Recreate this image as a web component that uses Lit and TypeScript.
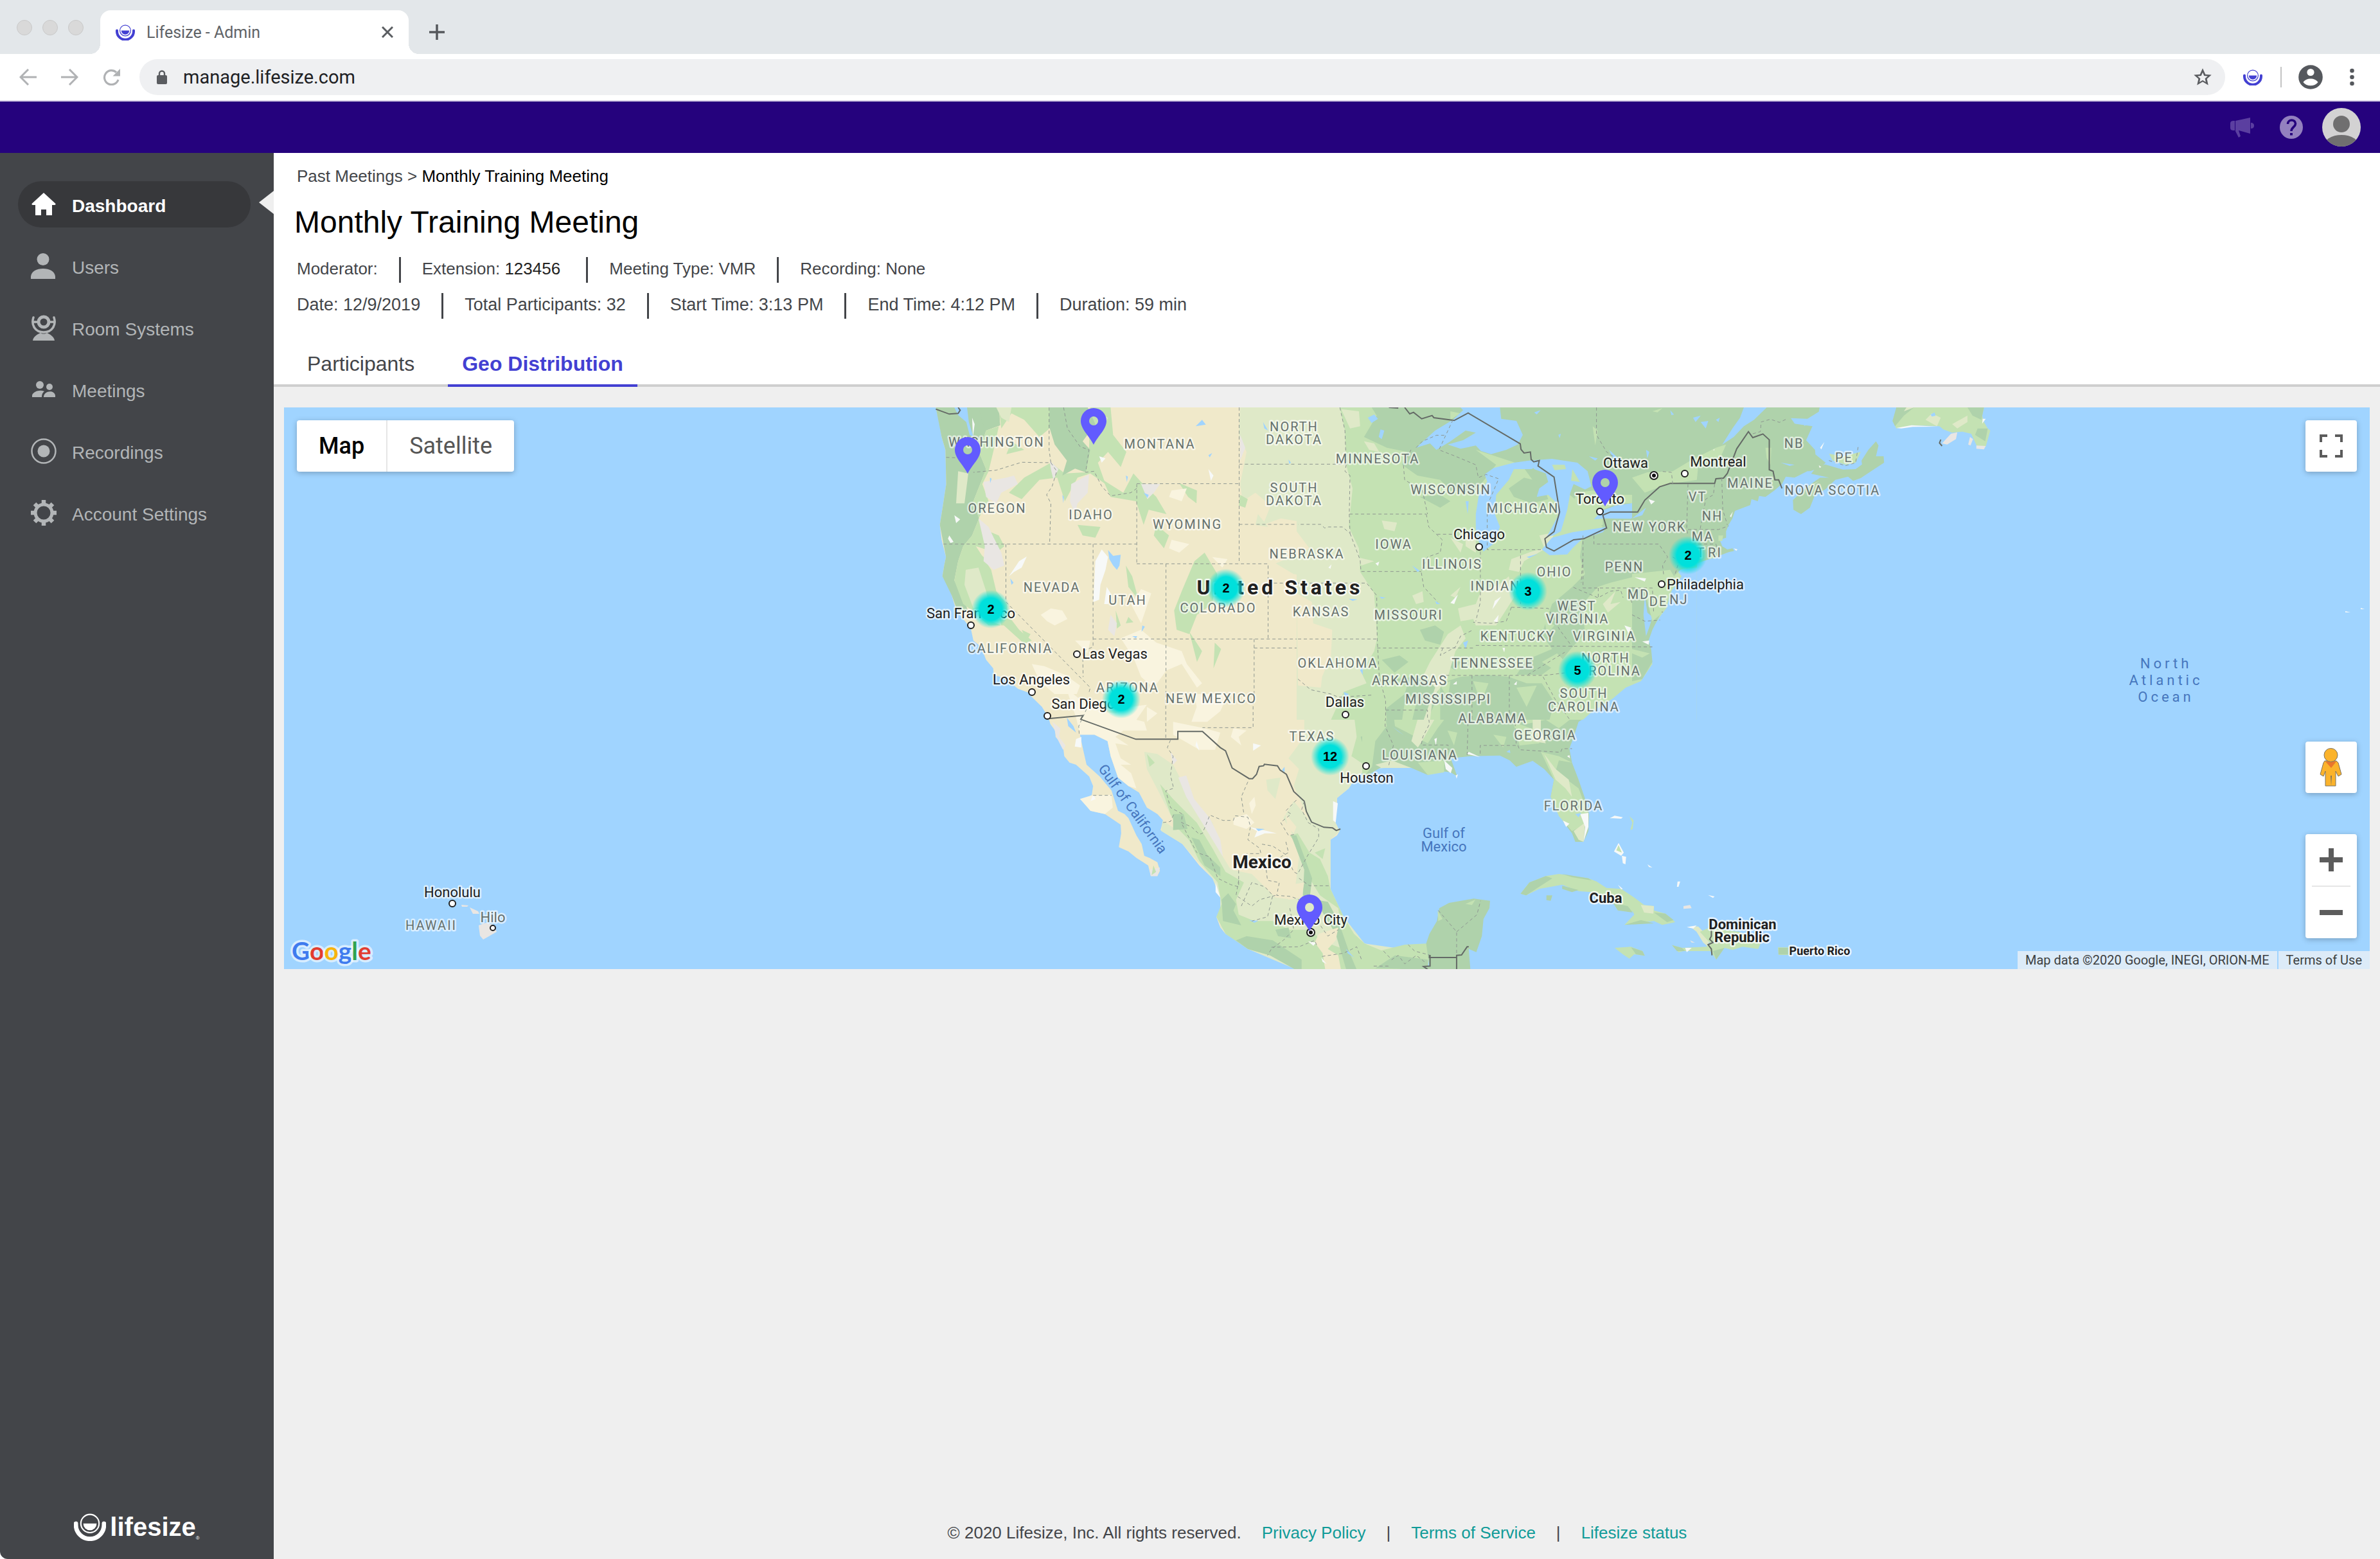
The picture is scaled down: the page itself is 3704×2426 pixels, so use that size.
import { LitElement, html, css, svg } from "lit";
import { customElement, property, state } from "lit/decorators.js";
import { classMap } from "lit/directives/class-map.js";

type Pt = [number, number];
type Label = [string, number, number];

/* ---------- icons ---------- */

const brandMark = (color: string) => svg`
  <path d="M3 18v2a21 21 0 0 0 42 0v-2" fill="none" stroke=${color} stroke-width="6.5" stroke-linecap="round"/>
  <circle cx="24" cy="18" r="13.6" fill="none" stroke=${color} stroke-width="2"/>
  <path d="M14 18h20a10 10 0 0 1-20 0z" fill=${color}/>`;

const navIcons: Record<string, unknown> = {
  dashboard: svg`<path fill="currentColor" d="M20 2 L38.500 19 Q39 21 37 21 H33 V37 H24 V28 H16 V37 H7 V21 H3 Q1 21 1.500 19z"/>`,
  users: svg`<ellipse cx="19" cy="9.500" rx="9.500" ry="9.500" fill="currentColor"/><path fill="currentColor" d="M0 40v-4c1-8 9-12 19-12s18 4 19 12v4z"/>`,
  rooms: svg`<path d="M4 4c-4 12 3 23 16 23s20-11 16-23M4 11h6M30 11h6" fill="none" stroke="currentColor" stroke-width="3.500" stroke-linecap="round"/>
    <circle cx="20" cy="11" r="8" fill="none" stroke="currentColor" stroke-width="5"/>
    <path d="M3 40c1-7 8-10 12-12 3 2 7 2 10 0 4 2 11 5 12 12z" fill="currentColor"/>`,
  meetings: svg`<circle cx="14" cy="13" r="6" fill="currentColor"/><circle cx="29" cy="16" r="5" fill="currentColor"/>
    <path d="M2 32v-3c2-6 12-9 19-6-3 2-4 5-4 9zM20 32c0-10 16-12 18-3v3z" fill="currentColor"/>`,
  recordings: svg`<circle cx="20" cy="20" r="18.500" fill="none" stroke="currentColor" stroke-width="2.500"/><circle cx="20" cy="20" r="9.500" fill="currentColor"/>`,
  settings: svg`<circle cx="20" cy="20" r="13" fill="none" stroke="currentColor" stroke-width="5"/>
    <path d="M20 0v7M20 33v7M0 20h7M33 20h7M6 6l5 5M29 29l5 5M34 6l-5 5M11 29l-5 5" stroke="currentColor" stroke-width="6.500"/>`,
};

/* ---------- map data ---------- */

const stateLabels: Label[] = [
  ["WASHINGTON", 1551, 695], ["MONTANA", 1805, 698], ["OREGON", 1552, 798], ["IDAHO", 1698, 808],
  ["WYOMING", 1848, 823], ["NEVADA", 1637, 921], ["UTAH", 1755, 941], ["COLORADO", 1896, 953],
  ["CALIFORNIA", 1572, 1016], ["ARIZONA", 1755, 1077], ["NEW MEXICO", 1885, 1094],
  ["NORTH", 2014, 671], ["DAKOTA", 2014, 691], ["SOUTH", 2014, 766], ["DAKOTA", 2014, 786],
  ["NEBRASKA", 2034, 869], ["KANSAS", 2056, 959], ["OKLAHOMA", 2082, 1039], ["MINNESOTA", 2144, 721],
  ["WISCONSIN", 2258, 769], ["MICHIGAN", 2370, 798], ["IOWA", 2169, 854], ["ILLINOIS", 2260, 885],
  ["INDIANA", 2335, 919], ["OHIO", 2419, 897], ["PENN", 2528, 889], ["NEW YORK", 2567, 827],
  ["MD", 2550, 932], ["DE", 2581, 943], ["NJ", 2613, 940], ["MISSOURI", 2192, 964],
  ["WEST", 2454, 950], ["VIRGINIA", 2455, 970], ["KENTUCKY", 2362, 997], ["VIRGINIA", 2497, 997],
  ["TENNESSEE", 2323, 1039], ["NORTH", 2499, 1031], ["CAROLINA", 2498, 1051], ["ARKANSAS", 2194, 1066],
  ["MISSISSIPPI", 2254, 1095], ["SOUTH", 2465, 1086], ["CAROLINA", 2465, 1107], ["ALABAMA", 2323, 1125],
  ["GEORGIA", 2405, 1151], ["LOUISIANA", 2210, 1182], ["FLORIDA", 2449, 1261], ["TEXAS", 2042, 1153],
  ["NB", 2792, 697], ["PE", 2870, 719], ["MAINE", 2724, 759], ["NOVA SCOTIA", 2852, 770],
  ["VT", 2642, 780], ["NH", 2665, 810], ["MA", 2650, 842], ["CT", 2640, 867], ["RI", 2669, 867],
  ["HAWAII", 671, 1447],
];

const cityLabels: Label[] = [
  ["San Francisco", 1511, 962], ["Las Vegas", 1735, 1025], ["Los Angeles", 1605, 1065],
  ["San Diego", 1686, 1103], ["Chicago", 2302, 839], ["Toronto", 2490, 784], ["Ottawa", 2530, 728],
  ["Montreal", 2674, 726], ["Philadelphia", 2654, 917], ["Dallas", 2093, 1100],
  ["Houston", 2127, 1218], ["Mexico City", 2040, 1439], ["Honolulu", 704, 1396],
];

const cityDots: Pt[] = [
  [1511, 973], [1676, 1018], [1606, 1077], [1630, 1114], [2302, 851], [2490, 796],
  [2622, 737], [2586, 909], [2094, 1112], [2126, 1192], [704, 1406],
];
const capitalDots: Pt[] = [[2574, 740], [2040, 1451]];

const clusters: [number, number, number][] = [
  [2, 1542, 948], [2, 1908, 915], [2, 1745, 1088], [3, 2378, 920],
  [5, 2455, 1043], [2, 2627, 864], [12, 2070, 1177],
];
const pins: Pt[] = [[1506, 737], [1702, 692], [2498, 788], [2038, 1449]];

/* Each sheet of the base map is drawn on its own grid. */
const west = svg`<g transform="translate(1420 620) scale(.3954 .33333)">
  <path class="sand" d="M92 42 105 110 115 180 130 240 133 400 120 500 108 590 115 660 132 740 125 780 118 830 140 870 155 920 170 980 200 1030 230 1075 240 1130 270 1160 290 1220 318 1260 320 1290 370 1310 415 1355 460 1375 490 1410 520 1440 530 1500H1600V42z"/>
  <path class="wood" d="M92 42H340L345 125 290 150 262 250 290 330 240 480 262 560 235 640 200 690 180 760 165 850 205 940 220 1000 175 985 155 920 118 830 125 780 132 740 108 590 120 500 133 400 130 240 115 180z"/>
  <path class="leaf" d="M290 150 340 130 320 240 300 340 275 400 300 480 260 560 300 620 340 640 362 690 330 720 250 690 310 800 330 900 372 960 375 1010 420 1080 470 1130 440 1145 360 1060 300 1060 235 990 200 960 165 850 180 760 200 690 235 640 262 560 240 480 290 330 262 250z"/>
  <path class="leaf" d="M340 42H595L560 120 500 180 440 100 390 70 350 140zM700 42H780L790 170 842 250 820 320 770 250 730 300 760 400 700 350 650 370 600 480 570 370 500 380 430 470 380 440 440 370 500 330 545 300 600 350 680 345 695 240z"/>
  <path class="wood" d="M540 42H690L720 120 670 200 700 240 682 345 640 328 590 360 608 290 560 215 538 130zM260 42H340L345 125 285 150z"/>
  <path class="leaf" d="M750 380 830 440 870 350 900 390 960 460 1000 540 930 520 910 590 880 480 780 460zM1050 395 1120 430 1118 490 1085 460zM840 780 865 830 890 940 850 880zM1060 900 1110 760 1150 720 1200 820 1180 960 1120 1010 1090 1100 1040 1080 1030 990zM650 590 740 600 720 650 670 640zM960 590 1010 640 990 700 950 640zM230 690 300 760 290 800zM800 990 820 1060 805 1075zM1190 1140 1215 1170 1185 1260zM850 1020 870 1045 840 1050z"/>
  <path class="meadow" d="M1290 42H1600V590L1450 560 1380 590 1410 500 1350 440 1300 480 1290 400 1315 250 1285 170zM1430 770 1568 700H1600V840L1500 820zM330 42 390 42 380 110 350 90zM210 800 260 790 290 900 300 960 240 980 205 870zM180 340 220 350 205 490 172 490zM300 990 340 1010 350 1060 310 1040zM1360 540 1400 600 1350 590zM720 60 770 90 740 160z"/>
  <path class="leaf" d="M1290 450 1320 470 1310 510 1285 500zM1090 1090 1140 1180 1120 1230zM390 200 440 240 370 260zM430 1080 465 1100 450 1130z"/>
  <path class="stone" d="M280 390 370 370 400 360 415 400 350 440 330 490 290 460zM260 560 300 600 320 650 350 720 362 780 320 800 280 760 285 690zM625 400 695 355 690 440 650 490 640 540 620 480zM540 290 575 330 555 380 545 330zM900 400 975 400 950 440 925 470zM780 1010 805 1050 795 1110 770 1080zM1290 170 1310 230 1290 290zM690 1430 730 1400 720 1470zM560 1440 620 1460 610 1500zM910 1390 970 1420 960 1460z"/>
  <path class="pale" d="M505 1010 545 980 590 990 610 1030 560 1060 530 1040zM860 960 900 890 940 910 920 980 900 1050zM820 1120 900 1080 960 1140 1060 1180 1080 1240 1140 1330 1120 1350 1060 1240 1000 1270 950 1350 900 1300 870 1210zM470 1240 520 1250 600 1290 660 1340 640 1400 560 1380 500 1320zM1020 430 1080 420 1060 480 1010 460zM1020 660 1090 680 1050 720 1010 700zM1090 1400 1150 1430 1170 1500H1050zM1190 1430 1230 1500H1180zM640 1130 700 1130 690 1190zM1180 740 1240 750 1220 790zM650 1420 720 1440 700 1500H630z"/>
  <path class="white" d="M720 760 745 705 770 740 760 800 740 870 735 940 712 950zM380 830 420 760 450 738 430 790 400 810zM145 640 162 670 150 675 140 655zM765 880 780 910 770 960 755 960zM735 270 760 280 745 300zM1165 330 1185 360 1175 385zM235 90 245 120 238 180zM165 545 188 565 172 582z"/>
  <path class="sea" d="M165 42H215L222 110 240 180 225 170 212 110 180 78zM770 708 790 735 820 730 815 780 805 800 790 780 775 750zM1115 130 1140 100 1155 122zM385 840 398 860 390 870zM305 370 312 375 306 395zM590 450 596 460 594 490zM910 440 930 450 925 465zM1165 265 1180 255 1170 275zM905 1060 915 1065 902 1090zM865 1110 885 1110 880 1120zM1380 110 1400 150 1385 140zM1480 285 1490 300 1483 305zM840 360 848 365 844 390z"/>
  <path class="line" d="M92 50 145 73 180 70 188 55 180 42M530 1495 680 1480 670 1500"/>
  <path class="dash" d="M538 42V240L545 300 430 298 330 335 240 345M545 300 568 340 550 410 528 450 545 490 540 680M595 42 610 140 660 225 695 240 682 345 715 340 745 410 780 455 860 440 883 420M122 680H883M883 400V772M883 398H1285M1286 42V772M1286 307H1600M1286 588H1600M883 772H1400V1123M998 772V1500M368 680V950L700 1350 680 1440 680 1500M711 680V1160L670 1180 672 1300M711 1123H1600M1345 1123V1500M1345 1165H1518V1330L1560 1345M1400 862H1600M133 275 170 277"/>
</g>`;

const middle = svg`<g transform="translate(2020 620) scale(.3954 .33333)">
  <path class="leaf" d="M-5 42H1570V1500H-5z"/>
  <path class="meadow" d="M-5 42H165L185 150 190 310 215 420 200 600 240 700 245 810 300 910 312 1120 300 1180 250 1280 270 1330 180 1370 130 1500H-5zM170 50 240 60 245 130 205 140zM260 200 300 210 320 250 280 240zM230 740 300 760 250 780z"/>
  <path class="sand" d="M-5 620 45 700 -5 740zM-5 910 55 950 60 1050 135 1080 130 1200 95 1300 90 1350 0 1340z"/>
  <path class="wood" d="M260 180 310 80 290 42H1570V790L1420 800 1330 830 1230 860 1180 880 1120 960 1130 1100 1080 1160 1040 1220 960 1290 860 1290 900 1220 1000 1170 960 1100 1000 960 1080 880 1130 820 1110 740 1120 650 1200 600 1140 520 1060 440 960 440 880 310 700 240 780 310 720 400 690 440 600 430 560 380 470 360 410 310 430 250 350 230z"/>
  <path class="leaf" d="M1020 640 1100 440 1160 430 1250 450 1380 450 1340 490 1260 490 1200 520 1200 590 1080 620zM1370 380 1430 330 1530 290 1570 310V390L1460 400 1410 430 1370 440z"/>
  <path class="wood" d="M830 420 890 370 960 390 985 470 920 490 850 460zM480 1080 540 1060 575 1090 560 1150 500 1130zM330 1220 400 1200 435 1230 380 1280zM345 1450 420 1380 430 1340 380 1310 460 1300 560 1330 540 1420 510 1500H350zM560 1330 640 1300 740 1290 830 1300 900 1330 960 1330 1010 1420 990 1500H560zM560 1230 640 1230 620 1270zM480 460 560 450 600 480 560 510z"/>
  <path class="meadow" d="M830 800 840 750 920 715 970 700 950 640 1010 625 990 690 890 760 870 810zM630 980 700 960 720 900 790 870 830 830 850 930 780 1060 700 1060 690 1030 640 1040zM590 1100 640 1060 660 1120 620 1180 590 1300 530 1400 520 1500H495L540 1350 495 1290 520 1230zM450 920 490 900 495 950 465 960zM330 570 390 580 380 620 340 610zM660 620 700 640 700 720 660 690zM1180 920 1200 960 1250 900 1230 960 1270 950 1220 1000zM1395 880 1450 860 1440 930 1400 960zM640 880 620 930 600 920zM600 650 650 680 640 720z"/>
  <path class="leaf" d="M600 60 640 70 600 100zM1160 130 1180 150 1170 220zM560 1340 600 1320 590 1400zM690 1320 750 1330 720 1420zM860 1350 940 1340 900 1440zM960 1230 1020 1190 1060 1240 1000 1260zM420 1420 470 1400 450 1500H410zM970 1030 1010 1060 980 1100z"/>
  <path class="white" d="M1285 1060 1312 1070 1300 1095zM765 985 775 945 800 925 780 960zM600 955 630 915 615 960zM770 1040 790 1010 785 1045zM1355 1130 1385 1145 1380 1155zM320 762 315 782 305 770zM610 1335 625 1320 625 1335zM850 1335 862 1320 860 1338zM1450 365 1462 385 1448 388zM1380 480 1400 485 1385 500zM715 450 745 388 725 470 712 520zM805 1165 815 1165 812 1185zM120 790 132 775 128 795z"/>
  <path class="sea" d="M465 230 540 150 610 100 650 55 640 42H795L800 95 860 105 885 170 865 215 820 240 760 260 720 245 700 220 640 235 590 215 650 195 700 160 660 150 600 200 545 240 520 210z"/>
  <path class="sea" d="M700 610 700 540 712 450 745 388 735 355 770 325 850 300 910 290 945 310 920 330 850 330 830 380 780 450 775 540 795 600 768 680 730 715 705 650z"/>
  <path class="sea" d="M910 290 1000 282 1100 300 1140 340 1155 410 1130 425 1085 400 1072 440 1060 520 1035 620 1005 640 980 645 1025 545 1020 490 985 450 940 460 950 420 985 390 975 350 930 330z"/>
  <path class="leaf" d="M1000 310 1050 310 1055 330 1010 335zM1080 330 1110 390 1075 385z"/>
  <path class="sea" d="M960 705 1000 650 1080 625 1215 600 1200 625 1120 655 1080 700 1060 728 990 732zM1165 565 1195 525 1250 500 1370 480 1368 520 1310 562 1210 560zM275 90 300 75 315 95 290 115zM325 145 340 150 330 190 318 180zM1225 240 1270 290 1250 310zM930 65 955 55 940 75zM1025 170 1035 165 1030 185zM1365 250 1410 230 1425 260 1390 275zM1145 270 1180 280 1170 290zM660 480 672 480 668 540zM1470 120 1475 100 1485 130zM900 740 945 725 910 745zM320 925 345 930 330 935zM450 780 480 805 470 810zM200 935 235 938 215 945zM540 945 560 960 545 960zM180 1370 200 1380 190 1410zM650 1140 670 1130 660 1170zM245 1270 255 1240 255 1290zM1340 1000 1360 960 1365 1000 1380 1040 1340 1030z"/>
  <path class="sea" d="M1570 790 1490 800 1510 830 1470 900 1450 980 1430 1010 1390 1080 1375 1130 1385 1180 1395 1240 1350 1320 1290 1350 1240 1400 1150 1470 1120 1502H1570zM1370 950 1380 1000 1400 1020 1385 1060 1370 1120 1365 1030z"/>
  <path class="line" d="M358 42 395 45M420 42 440 72 455 65 487 95 528 80 535 90 615 103 670 68 875 212 878 238 890 255 915 250 918 285 928 296 950 290 945 315 1008 367 1030 530 1008 622 972 655 978 695 1008 712 1085 660 1125 655 1215 605 1200 545 1230 530H1337L1370 470 1425 413 1470 397H1570"/>
  <path class="dash" d="M165 42 185 150 190 310 185 340 205 360 202 540H505M202 540 205 630 175 600 120 600 105 605 90 588H0M0 307H190M205 630 245 755 248 808H485M505 540 515 600 568 660 560 720 510 740 485 808 495 880 550 950M548 634H610M610 100 555 240 620 270 700 310 710 370 740 355 790 375 745 500V690L745 706H960M465 230 490 200 545 172H580M445 240 415 310 420 380 490 430 510 540M718 715V950L700 1040M876 706V960M840 975 820 1040 760 1050 690 1045M840 975 985 980 1030 1080 1080 1160M1122 640V885H1430M1165 640V680H1425L1455 740 1440 830M1182 885V930L1230 900 1270 895 1280 930M1180 930 1080 880M0 862H270L310 920 312 1123 320 1300 345 1410 345 1500M0 1123H312M312 1165H690M570 1165 560 1200 620 1160 640 1110 690 1080M700 1153 1395 1160M560 1293H970M685 1293V1500M832 1293V1500M970 1293 1060 1280 1175 1290M905 1290 1050 1185M345 1455H510V1500M1175 42V170L1215 250 1240 270M1535 397V640M1345 345 1430 335 1470 340 1465 400M1120 750 1115 860M1400 885 1405 997H1440M1310 940 1340 1030 1400 1045M965 1300 1010 1400 1070 1500M0 1310 50 1360 130 1380 160 1395 290 1385"/>
</g>`;

const east = svg`<g transform="translate(2540 620) scale(.3954 .33333)">
  <path class="wood" d="M0 42H738L735 62 690 95 625 92 640 118 710 130 685 195 720 240 722 262 762 300 745 320 690 345 640 370 605 365 590 400 560 430 525 460 500 455 495 480 470 470 465 498 405 525 395 560 380 590 370 620 370 650 345 660 355 690 375 705 395 700 402 712 380 718 330 740 280 760 190 800 165 830 150 880 145 930 110 1010 80 1080 65 1130 75 1170 80 1230 40 1310 0 1320z"/>
  <path class="sea" d="M440 42H530L480 100 440 130 400 180 355 215 395 140 425 90zM150 55 165 75 155 78zM240 90 270 80 250 110zM270 110 300 105 290 140zM585 300 640 310 620 315zM55 240 68 250 60 280zM330 100 345 90 340 110zM670 110 690 100 680 130zM640 370 690 340 720 340 700 355zM0 560 55 510 40 545zM50 920 60 1000 80 1020 70 1060 55 1110 45 1010z"/>
  <path class="leaf" d="M0 370 60 345 160 340 230 290 330 230 370 215 350 270 260 320 255 380 160 397 110 413 50 440zM0 820 150 800 165 830 150 880 145 930 110 1010 80 1040 50 900 0 880zM525 230 548 230 545 310 530 280zM340 640 358 640 355 665 340 665zM300 740 345 735 320 748zM80 60 120 45 100 65zM0 1170 70 1190 40 1210 0 1190z"/>
  <path class="wood" d="M665 540 635 520 633 475 680 420 740 370 775 370 705 352 725 320 760 308 830 332 880 330 905 308 903 290 930 240 960 200 970 220 960 270 990 270 992 300 960 325 900 372 870 385 850 365 800 380 760 425 720 450 700 510z"/>
  <path class="leaf" d="M775 258 830 270 900 250 880 300 840 310 790 290zM1040 42H1385L1378 80 1385 110 1400 140 1410 150 1392 225 1360 230 1335 165 1300 155 1260 160 1225 145 1210 130 1100 125 1040 140 1025 105 1060 60zM1345 180 1375 130 1395 190 1380 225z"/>
  <path class="wood" d="M1040 42H1110L1070 80 1035 130 1025 105zM1320 42H1385L1375 100 1340 80zM1360 140 1400 140 1390 200 1350 170z"/>
  <path class="meadow" d="M1180 70 1215 90 1200 130 1155 100zM1260 120 1320 80 1320 110 1280 140zM1070 60 1080 42H1110z"/>
  <path class="sea" d="M1175 75 1190 65 1195 80 1180 85z"/>
  <path class="white" d="M1040 138 1100 125 1205 132 1105 133 1060 140zM1380 95 1392 95 1378 118zM740 230 757 203 745 238zM735 312 745 320 738 324zM385 550 397 528 390 555zM65 470 90 480 75 495zM400 700 415 705 410 712zM40 1135 68 1130 65 1150zM10 835 55 840 50 855zM690 415 738 385 700 412zM320 240 325 235 322 245z"/>
  <path class="stone" d="M1220 210 1255 165 1280 158 1275 190 1240 215zM1330 180 1342 190 1332 220 1323 215zM1355 220 1392 222 1385 238 1355 235z"/>
  <path class="line" d="M0 530H22L50 475 108 413 150 397H325L330 375 360 372 375 350 412 235 458 155 475 183 515 166 540 193V333L555 340 562 380H577L590 420M1215 192 1210 208 1220 222"/>
  <path class="dash" d="M475 165 505 155 508 110 545 97 580 112 610 95M220 400 215 610 220 640M220 612H340L380 595M353 372 357 520 375 590M325 400 320 450 290 470 268 610M215 680H330L340 720M0 680H105L140 740 120 780 125 830M0 885H80L85 1000M0 1160H78M775 290 840 314 880 300 890 225M160 740 185 760 170 818M0 1010 50 1040 110 1035M160 400 155 345 110 340"/>
</g>`;

const south = svg`<g transform="translate(1540 1080) scale(.40816 .33333)">
  <path class="sand" d="M150 0 200 60 225 110 232 140 250 170 252 200 280 240 285 290 305 320 330 330 380 385 395 430 390 470 370 490 345 490 370 520 385 545 440 560 500 610 502 650 493 715 530 735 560 765 605 800 615 850 640 850 650 825 640 785 610 765 590 755 580 700 560 660 530 580 515 560 490 545 465 450 420 385 370 330 357 260 345 190 400 190 450 220 462 290 490 390 530 430 570 460 600 530 640 560 662 590 652 635 735 700 800 800 850 860 868 890 880 950 885 980 880 1010 865 1040 880 1090 900 1120 940 1150 985 1190 1070 1220 1120 1255 1170 1286H1575V1190L1500 1200 1430 1165 1390 1120 1350 1040 1320 970 1300 910 1300 680 1325 660 1335 640 1315 590 1325 530 1325 485 1370 440 1390 400 1350 370 1440 350 1575 335V0z"/>
  <path class="pale" d="M160 0H300L330 110 345 190 400 190 450 220 462 290 490 390 530 430 560 440 540 370 500 330 540 330 500 300 480 230 530 240 480 200 510 170 600 170 590 130 560 120 600 50 540 60 480 90 420 80 350 30 320 0zM385 475 465 470 470 530 440 560 385 545 345 490zM600 60 640 90 600 130zM700 130 780 150 820 160 880 180 860 260 800 260 700 190zM780 0H910L880 80 830 130 770 130 790 60zM930 160 980 170 950 200 960 240 920 200zM930 580 980 560 1010 600 980 630 930 610zM990 510 1010 480 1015 520 1000 560z"/>
  <path class="meadow" d="M1200 0H1575V340L1440 350 1390 400 1370 440 1325 485 1315 590 1335 640 1300 680V910L1350 1040 1430 1165 1575 1190V1286H1170L985 1190 880 1090 880 950 850 860 735 700 655 640 660 590 720 640 680 540 600 350 590 270 640 280 700 330 760 470 850 600 880 740 920 820 1000 840 1090 950 1160 960 1180 760 1150 640 1120 580 1160 500 1220 590 1160 430 1180 350 1140 300 1200 200zM1055 400 1110 390 1090 490 1060 450z"/>
  <path class="leaf" d="M650 420 700 490 740 540 790 600 850 720 900 830 970 880 940 960 950 1030 1010 1060 1080 1060 1140 1100 1230 1100 1260 1150 1350 1190 1340 1100 1330 1000 1260 940 1210 840 1170 700 1145 660 1175 650 1220 740 1260 770 1290 850 1300 910 1350 1040 1390 1120 1430 1165 1500 1200 1568 1190V1286H1170L1070 1220 985 1190 900 1120 865 1040 885 980 870 880 800 780 760 680 720 630 690 560zM1390 100 1460 60 1520 80 1500 300 1440 340 1380 290 1400 200zM600 280 630 320 610 340z"/>
  <path class="wood" d="M770 670 800 680 830 750 880 810 880 850 820 800zM885 960 910 930 940 980 930 1010 960 1080 890 1060zM1150 660 1170 660 1200 760 1230 860 1220 960 1195 940 1200 820zM1240 960 1290 970 1330 1060 1370 1200 1400 1286H1360L1320 1120 1260 1000zM980 1130 1080 1150 1190 1240 1190 1286H1165L1070 1220 985 1190 940 1150zM1415 200 1480 160 1530 230 1568 260V340L1440 300zM1480 0H1568V240L1510 160zM1090 1100 1140 1090 1150 1140 1100 1130zM700 560 740 560 755 630 700 635z"/>
  <path class="sand" d="M1255 1120 1330 1090 1320 1150 1290 1190 1330 1220 1340 1286H1280L1270 1210 1240 1160zM1100 900 1200 880 1190 950 1140 960zM1130 560 1170 620 1160 650 1135 620z"/>
  <path class="stone" d="M240 130 270 160 265 200 290 240 280 260 255 200zM720 390 750 380 780 490 840 580 880 680 890 760 860 700 800 580 750 480zM690 270 715 310 700 330zM610 820 650 810 640 850 615 850z"/>
  <path class="leaf" d="M625 800 635 830 618 845zM1240 740 1280 720 1270 770zM1250 770 1290 870 1240 860z"/>
  <path class="white" d="M330 210 350 200 350 250 325 245zM395 470 405 490 385 500zM862 880 880 950 862 925zM1005 230 1035 240 1005 265zM990 620 1060 640 1095 650 1050 650 1010 670 1020 640zM790 220 800 265 785 240zM1310 500 1328 510 1320 600 1310 590zM1215 1155 1245 1160 1235 1175zM1265 1230 1285 1260 1270 1250z"/>
  <path class="sea" d="M295 110 320 150 330 180 300 150zM1015 628 1050 630 1025 640zM1360 1190 1390 1230 1365 1210zM1475 1240 1480 1210 1485 1200zM1490 210 1510 220 1495 230zM1115 355 1125 340 1125 365zM990 1055 1025 1058 1010 1068zM1330 310 1350 320 1340 330z"/>
  <path class="line" d="M225 115 357 100 348 118 558 211H718V175H812L880 250 900 265 925 345 990 395H1003L1018 375 1028 338 1045 335 1048 328 1098 335 1108 355 1132 375 1160 455 1200 500 1208 548 1228 598 1275 622 1308 625 1322 637 1338 630"/>
  <path class="dash" d="M370 70 340 150 342 185M672 0V211M1005 30V157H812M690 215 678 250 700 290 690 380 702 440 672 452 690 530 735 560 732 600 770 620 800 655 812 650 840 565 890 590 930 590 935 568 985 575 995 620 985 680 1030 720 1035 745H980M985 410 960 480 970 560M662 600 690 595 705 555M735 610 790 740 840 760 870 860 920 890 950 900 950 820M395 473H465M1170 495 1130 545 1150 560 1110 600 1140 660 1165 655M1200 500 1190 540 1215 600 1255 630 1255 670 1210 760 1175 840 1160 830 1130 750 1080 710 1035 700M1055 820 1060 870 1105 880 1095 940 1150 945 1180 960M1180 860 1220 895H1300M950 870 940 940 1000 990 1030 960 1090 940M960 990 1000 880 1050 900 1080 940 1060 1040 1000 1060M1145 1000 1160 1100 1120 1150 1075 1190 1060 1220M1075 1182 1180 1180 1240 1150 1250 1180M1250 1060 1290 1130 1330 1100M1268 1225 1350 1210 1400 1180 1420 1245 1460 1280H1530M1510 10V150L1530 200 1540 270 1520 345M1130 690 1140 740 1110 760"/>
</g>`;

const gulf = svg`<g transform="translate(2120 1080) scale(.5102 .33333)">
  <path class="wood" d="M0 -5H785L740 40 700 92 660 130 645 200 632 255 640 320 660 400 680 490 692 560 690 640 675 690 650 690 640 650 615 600 600 560 575 480 585 400 555 350 520 312 470 340 450 310 420 287 330 290 270 300 290 385 270 365 240 360 200 378 150 345 60 340 0 395z"/>
  <path class="leaf" d="M0 0H60L75 150 40 220 30 340 0 395zM90 30 210 30 230 0H280L270 80 230 160 200 230 150 190 100 150zM400 0 490 10 520 80 560 100 620 60 600 0H785L700 92 650 100 600 160 560 120 500 140 470 100 430 70zM460 130 550 180 540 230 480 240zM545 270 600 290 640 320 600 310 590 360 660 440 690 560 680 610 640 640 600 570 575 480 585 400zM260 170 290 180 280 240zM400 190 440 200 430 250zM170 320 250 310 250 365 200 378z"/>
  <path class="meadow" d="M180 60 230 50 220 120 190 200 170 250 150 220 165 140zM520 110 545 100 545 170 560 230 520 220zM555 280 590 350 630 400 640 480 620 440 590 400zM40 330 90 310 150 345 60 345zM645 640 680 600 675 690 660 680z"/>
  <path class="white" d="M665 560 690 555 690 620 675 690 680 620zM612 590 632 605 622 620zM320 280 360 295 325 270zM250 310 275 345 270 370 255 350zM625 290 632 285 634 300zM220 210 228 205 225 240zM285 380 292 375 288 395z"/>
  <path class="sea" d="M90 150 130 195 155 220 110 175zM650 560 668 555 660 575zM205 70 212 95 195 120zM440 270 450 260 452 275z"/>
  <path class="leaf" d="M0 1165 50 1200 130 1170 195 1165 205 1200 200 1286H0z"/>
  <path class="wood" d="M195 1165 205 1120 228 1060 235 1000 265 975 340 955 390 965 388 1000 370 1050 365 1130 348 1205 325 1190 330 1286H100L205 1270zM40 1280 100 1220 200 1240V1286z"/>
  <path class="leaf" d="M315 980 345 960 335 985zM230 1010 245 1050 232 1060z"/>
  <path class="leaf" d="M483 932 510 880 560 850 600 840 690 860 715 875 745 905 790 910 830 950 860 985 890 990 890 1010 925 1025 955 1065 915 1078 890 1060 800 1078 830 1030 825 1015 780 1010 765 975 700 925 660 920 610 890 540 910 500 940z"/>
  <path class="wood" d="M483 932 510 880 560 850 580 860 530 910 500 940zM610 840 690 860 700 870 640 855zM610 895 660 915 640 925 610 910zM890 1020 925 1025 950 1055 930 1065zM800 1078 850 1055 890 1070zM765 975 810 990 825 1020 780 1010zM562 940 580 940 575 965 562 962z"/>
  <path class="meadow" d="M850 985 890 990 888 1025 860 1020zM1000 1085 1025 1085 1060 1140 1055 1180 1040 1160 1020 1110z"/>
  <path class="leaf" d="M770 1185 820 1180 855 1200 862 1222 830 1215 815 1235 795 1215zM945 1172 975 1185 1050 1180 1060 1160 1030 1110 1060 1090 1100 1100 1150 1110 1215 1165 1208 1190 1160 1180 1130 1195 1105 1185 1080 1240 1062 1200 980 1200 965 1205zM1268 1183H1300V1218H1270z"/>
  <path class="wood" d="M820 1183 855 1200 862 1222 835 1215zM945 1172 975 1185 985 1200 960 1200zM1070 1200 1105 1185 1080 1240zM1270 1185H1300V1216H1270z"/>
  <path class="white" d="M755 580 770 568 795 575 790 582 765 580zM768 735 782 695 798 740 790 755zM792 755 805 760 803 795 795 790zM960 900 962 875 970 875 965 900zM1055 938 1075 945 1070 952zM870 795 885 810 875 808zM780 890 795 910 790 912zM990 1088 1020 1080 1010 1095zM985 1185 1005 1185 990 1205z"/>
  <path class="stone" d="M980 990 1000 985 1005 1000 980 1003zM1000 1150 1015 1160 1005 1160z"/>
  <path class="leaf" d="M775 730 782 705 792 740zM815 570 828 590 825 630 818 635 824 600z"/>
  <path class="line" d="M205 1218V1230H288V1220L303 1218 320 1180 325 1180M207 1218V1270L187 1272 200 1286M288 1230V1286M1065 1100V1130L1060 1145 1070 1160 1055 1170 1065 1190 1067 1220"/>
  <path class="dash" d="M70 30V150L95 240 80 340M70 75H200L205 140 185 200 180 238H262V260M325 0 320 290M462 0 470 240H360V290M475 240 480 260 605 272 610 255H640M600 0 640 120M232 1010 288 1110V1220M288 1110 350 1030 361 965M140 1170 160 1200 205 1218M65 1200 90 1240 110 1220 130 1260 165 1220 190 1250M35 1270H80"/>
</g>`;

const hawaii = svg`
  <path class="stone" d="M745 1440 756 1436 768 1439 773 1450 752 1462 747 1456z"/>
  <path class="stone" d="M731 1412 744 1418 746 1422H736zM718 1408 729 1409 727 1411H719z"/>
  <path class="white" d="M3650 951 3658 953H3650zM3674 946 3680 948H3674z"/>`;

@customElement("geo-map")
export class GeoMap extends LitElement {
  @state() private view: "map" | "satellite" = "map";

  static styles = css`
    :host { display: block; position: relative; overflow: hidden; aspect-ratio: 3246 / 874; background: #a0d4ff; font-family: Roboto, "Liberation Sans", sans-serif; }
    .canvas { display: block; width: 100%; height: 100%; }
    .sand { fill: #f0e9ca; } .meadow { fill: #dfe9c8; } .leaf { fill: #c4e2b3; } .wood { fill: #afd2ab; }
    .pale { fill: #f9f4df; } .stone { fill: #e9e6e3; } .white { fill: #f7f9f8; } .sea { fill: #a0d4ff; }
    .line, .dash { fill: none; stroke: #646a66; stroke-width: 2; vector-effect: non-scaling-stroke; }
    .dash { stroke: #8e9791; stroke-width: 1; stroke-dasharray: 5 4; }
    text { text-anchor: middle; paint-order: stroke; stroke-linejoin: round; }
    .state { font-size: 20px; letter-spacing: 2px; fill: #66716d; stroke: rgba(255, 255, 255, .6); stroke-width: 5px; }
    .city { font-size: 22px; fill: #202020; stroke: rgba(255, 255, 255, .65); stroke-width: 5px; }
    .minor { fill: #66716d; }
    .country { font-size: 22px; font-weight: 700; fill: #202020; stroke: rgba(255, 255, 255, .75); stroke-width: 5px; }
    .small { font-size: 18px; }
    .large { font-size: 28px; }
    .huge { font-size: 32px; letter-spacing: 5px; }
    .water { font-size: 22px; fill: #4676bd; }
    .ocean { letter-spacing: 5px; }
    .dot { fill: #fff; stroke: #202020; stroke-width: 2; }
    .core { fill: #111; }
    .count { font: 700 20px "Liberation Sans", Arial, sans-serif; fill: #000; }
    .control { background: #fff; border: 0; border-radius: 4px; box-shadow: 0 2px 8px rgba(0, 0, 0, .25); }
    button { font: inherit; color: inherit; background: none; border: 0; padding: 0; cursor: pointer; }
    .types { position: absolute; left: 20px; top: 20px; display: flex; height: 80px; font-size: 36px; color: #565656; }
    .types button { padding: 0 34px; }
    .types button + button { border-left: 2px solid #e6e6e6; }
    .types .on { color: #000; font-weight: 500; }
    .icon { display: grid; place-items: center; width: 80px; height: 80px; }
    .top { position: absolute; right: 20px; top: 20px; }
    .stack { position: absolute; right: 20px; bottom: 48px; display: flex; flex-direction: column; gap: 64px; }
    .zoom { display: flex; flex-direction: column; align-items: center; }
    .rule { width: 60px; height: 2px; background: #e6e6e6; }
    .google { position: absolute; left: 10px; bottom: 0; width: 132px; height: 56px; }
    .google text { font: 700 39px Lato, "Open Sans", sans-serif; text-anchor: start; stroke: rgba(255, 255, 255, .6); stroke-width: 7px; }
    .legal { position: absolute; right: 0; bottom: 0; display: flex; gap: 2px; font-size: 20px; line-height: 28px; color: #3c3f41; }
    .legal > * { background: rgba(245, 245, 245, .7); padding: 0 12px; color: inherit; text-decoration: none; }
  `;

  private labels(items: Label[], cls: string) {
    return items.map(([t, x, y]) => svg`<text class=${cls} x=${x} y=${y}>${t}</text>`);
  }

  render() {
    return html`
      <svg class="canvas" viewBox="442 634 3246 874" preserveAspectRatio="xMidYMid slice" role="img" aria-label="Participants by location">
        <defs>
          <radialGradient id="glow">
            <stop offset="0" stop-color="#00e0dc"/><stop offset=".58" stop-color="#00e0dc"/><stop offset="1" stop-color="#00e0dc" stop-opacity="0"/>
          </radialGradient>
        </defs>
        ${west}${south}${gulf}${middle}${east}${hawaii}
        ${this.labels(stateLabels, "state")}
        ${cityDots.map(([x, y]) => svg`<circle class="dot" cx=${x} cy=${y} r="5"/>`)}
        ${capitalDots.map(([x, y]) => svg`<circle class="dot" cx=${x} cy=${y} r="6"/><circle class="core" cx=${x} cy=${y} r="3"/>`)}
        <circle class="dot" cx="767" cy="1444" r="4"/>
        ${this.labels(cityLabels, "city")}
        ${this.labels([["Hilo", 767, 1435]], "city minor")}
        ${this.labels([["Cuba", 2499, 1405], ["Dominican", 2712, 1446], ["Republic", 2711, 1466]], "country")}
        ${this.labels([["Puerto Rico", 2832, 1486]], "country small")}
        ${this.labels([["Mexico", 1964, 1351]], "country large")}
        ${this.labels([["United States", 1992, 925]], "country huge")}
        ${this.labels([["Gulf of", 2247, 1304], ["Mexico", 2247, 1325]], "water")}
        ${this.labels([["North", 3371, 1040], ["Atlantic", 3371, 1066], ["Ocean", 3371, 1092]], "water ocean")}
        <text class="water" transform="translate(1757 1263) rotate(54)">Gulf of California</text>
        ${pins.map(([x, y]) => svg`<path transform="translate(${x} ${y})" fill="#625bff" fill-rule="evenodd"
          d="M0 0C-7-14-20-24-20-37a20 20 0 0 1 40 0C20-24 7-14 0 0zM0-44a7 7 0 1 0 0 14a7 7 0 1 0 0-14z"/>`)}
        ${clusters.map(([n, x, y]) => svg`<circle cx=${x} cy=${y} r="30" fill="url(#glow)"/><text class="count" x=${x} y=${y + 7}>${n}</text>`)}
      </svg>

      <div class="types control">
        <button class=${classMap({ on: this.view === "map" })} @click=${() => (this.view = "map")}>Map</button>
        <button class=${classMap({ on: this.view === "satellite" })} @click=${() => (this.view = "satellite")}>Satellite</button>
      </div>

      <button class="control icon top" aria-label="Toggle fullscreen view">
        <svg width="36" height="36" viewBox="0 0 36 36"><path d="M2 12V2h10M24 2h10v10M34 24v10H24M12 34H2V24" fill="none" stroke="#5c5c5c" stroke-width="4"/></svg>
      </button>

      <div class="stack">
        <button class="control icon" aria-label="Street View">
          <svg width="36" height="60" viewBox="0 0 36 60">
            <path d="M8 20h18l3 3 5 18-5 3-4-8v23H9V36l-3 8-5-3L6 23z" fill="#fbb32b" stroke="#7b7260"/>
            <path d="M9 21h17l-8 10z" fill="#e8762c"/>
            <path d="M17 43h2l-1 16z" fill="#7b7260"/>
            <circle cx="17.500" cy="11" r="10.500" fill="#fbb32b" stroke="#7b7260"/>
          </svg>
        </button>
        <div class="zoom control">
          <button class="icon" aria-label="Zoom in"><svg width="36" height="36" viewBox="0 0 36 36"><path d="M0 18h36M18 0v36" stroke="#5c5c5c" stroke-width="8"/></svg></button>
          <div class="rule"></div>
          <button class="icon" aria-label="Zoom out"><svg width="36" height="36" viewBox="0 0 36 36"><path d="M0 18h36" stroke="#5c5c5c" stroke-width="8"/></svg></button>
        </div>
      </div>

      <svg class="google" viewBox="0 0 132 56">
        <text x="2" y="42"><tspan fill="#3f7bee">G</tspan><tspan fill="#e23d30">o</tspan><tspan fill="#f7b40d">o</tspan><tspan fill="#3f7bee">g</tspan><tspan fill="#30a350">l</tspan><tspan fill="#e23d30">e</tspan></text>
      </svg>

      <div class="legal"><span>Map data ©2020 Google, INEGI, ORION-ME</span><a href="#terms">Terms of Use</a></div>
    `;
  }
}

@customElement("browser-chrome")
export class BrowserChrome extends LitElement {
  @property() pageTitle = "";
  @property() address = "";

  static styles = css`
    :host { display: block; font-family: Roboto, "Liberation Sans", sans-serif; }
    button { border: 0; background: none; padding: 0; display: block; line-height: 0; cursor: pointer; }
    svg { display: block; flex: none; }
    .strip { display: flex; align-items: flex-end; height: 84px; background: #e3e7ea; }
    .lights { display: flex; gap: 16px; padding: 2px 26px 0; align-self: center; }
    .light { width: 22px; height: 22px; border: 1px solid #c9c9c9; border-radius: 50%; background: #d9d9d9; }
    .tab { position: relative; display: flex; align-items: center; box-sizing: border-box; width: 480px; height: 68px; padding: 0 24px; gap: 18px; background: #fff; border-radius: 16px 16px 0 0; }
    .tab::before, .tab::after { content: ""; position: absolute; bottom: 0; width: 16px; height: 16px; }
    .tab::before { right: 100%; background: radial-gradient(circle at 0 0, transparent 16px, #fff 16px); }
    .tab::after { left: 100%; background: radial-gradient(circle at 100% 0, transparent 16px, #fff 16px); }
    .title { flex: 1; font-size: 25px; color: #606367; }
    .plus { align-self: flex-end; margin: 0 32px 22px; }
    .bar { display: flex; align-items: center; height: 72px; padding: 0 40px 0 30px; background: #fff; border-bottom: 2px solid #d5cfe6; }
    .nav { display: flex; gap: 38px; padding-right: 30px; }
    .box { flex: 1; display: flex; align-items: center; height: 56px; padding: 0 20px 0 26px; gap: 24px; border-radius: 28px; background: #eff0f2; }
    .url { flex: 1; min-width: 0; border: 0; padding: 0; background: none; outline: 0; font: inherit; font-size: 29px; color: #202124; }
    .tools { display: flex; align-items: center; padding-left: 28px; }
    .split { width: 2px; height: 32px; margin: 0 26px 0 28px; background: #c4c4c4; }
    .more { margin-left: 42px; }
  `;

  render() {
    return html`
      <div class="strip">
        <div class="lights"><div class="light"></div><div class="light"></div><div class="light"></div></div>
        <div class="tab">
          <svg width="30" height="26" viewBox="0 1 48 42">${brandMark("#4340d2")}</svg>
          <span class="title">${this.pageTitle}</span>
          <button aria-label="Close tab"><svg width="18" height="18" viewBox="0 0 18 18"><path d="M1 1l16 16M17 1L1 17" stroke="#5a5d61" stroke-width="3"/></svg></button>
        </div>
        <button class="plus" aria-label="New tab"><svg width="24" height="24" viewBox="0 0 24 24"><path d="M0 12h24M12 0v24" stroke="#55585c" stroke-width="3.500"/></svg></button>
      </div>
      <div class="bar">
        <div class="nav">
          <button aria-label="Back"><svg width="27" height="26" viewBox="0 0 27 26"><path d="M27 13H2M14 1L2 13l12 12" fill="none" stroke="#b0b2b4" stroke-width="3"/></svg></button>
          <button aria-label="Forward"><svg width="27" height="26" viewBox="0 0 27 26"><path d="M0 13h25M13 1l12 12-12 12" fill="none" stroke="#b0b2b4" stroke-width="3"/></svg></button>
          <button aria-label="Reload"><svg width="27" height="26" viewBox="0 0 27 26"><path d="M24 17A11 11 0 1 1 21 5.500" fill="none" stroke="#b0b2b4" stroke-width="3.200"/><path d="M27 0v11.500H15.500z" fill="#b0b2b4"/></svg></button>
        </div>
        <div class="box">
          <svg width="18" height="22" viewBox="0 0 18 22"><rect x="1" y="8" width="16" height="14" rx="2" fill="#5a5c60"/><path d="M5 9V5.500a4 4 0 0 1 8 0V9" fill="none" stroke="#5a5c60" stroke-width="2.400"/></svg>
          <input class="url" type="text" aria-label="Address" .value=${this.address}>
          <button aria-label="Bookmark"><svg width="30" height="30" viewBox="0 0 24 24"><path fill="#5a5c60" d="M23 9.200l-7.600-.7L12 1 8.600 8.500 1 9.200l5.700 5L5 22l7-4.200 7 4.200-1.700-7.800zM12 15.700l-3.900 2.400 1-4.400-3.400-3 4.500-.4L12 6.100l1.800 4.200 4.500.4-3.400 3 1 4.400z"/></svg></button>
        </div>
        <div class="tools">
          <button aria-label="Lifesize extension"><svg width="30" height="26" viewBox="0 1 48 42">${brandMark("#4340d2")}</svg></button>
          <span class="split"></span>
          <button aria-label="Profile"><svg width="38" height="38" viewBox="0 0 38 38"><circle cx="19" cy="19" r="18.800" fill="#55585d"/><circle cx="19" cy="11.500" r="5.600" fill="#fff"/><path d="M7.500 27c4-7.500 19-7.500 23 0-5 7-18 7-23 0z" fill="#fff"/></svg></button>
          <button class="more" aria-label="Menu"><svg width="7" height="28" viewBox="0 0 7 28"><circle cx="3.500" cy="4" r="3.300" fill="#55585d"/><circle cx="3.500" cy="14" r="3.300" fill="#55585d"/><circle cx="3.500" cy="24" r="3.300" fill="#55585d"/></svg></button>
        </div>
      </div>`;
  }
}

@customElement("side-nav")
export class SideNav extends LitElement {
  @state() private active = "dashboard";

  private items: [string, string][] = [
    ["dashboard", "Dashboard"], ["users", "Users"], ["rooms", "Room Systems"],
    ["meetings", "Meetings"], ["recordings", "Recordings"], ["settings", "Account Settings"],
  ];

  static styles = css`
    :host { display: flex; flex-direction: column; box-sizing: border-box; width: 426px; padding: 44px 0 28px; background: #434549; }
    nav { display: flex; flex-direction: column; gap: 24px; }
    .row { position: relative; padding: 0 36px 0 28px; }
    .link { display: flex; align-items: center; gap: 24px; height: 72px; padding: 0 20px; box-sizing: border-box; border-radius: 36px; color: #b2b5b7; font-size: 28px; text-decoration: none; }
    .link svg { display: block; flex: none; overflow: visible; }
    .label { padding-top: 6px; }
    .on .link { background: #37383b; color: #fff; font-weight: 700; }
    .on::after { content: ""; position: absolute; right: 0; top: 15px; border: 18px solid transparent; border-left: 0; border-right: 23px solid #efefef; }
    .logo { display: flex; align-items: center; justify-content: center; gap: 6px; margin-top: auto; color: #fff; }
    .word { font-size: 40px; line-height: 44px; font-weight: 700; }
    .reg { font-size: 8px; }
    .logo svg { display: block; }
    .mark { display: flex; align-items: flex-end; }
  `;

  render() {
    return html`
      <nav aria-label="Main">
        ${this.items.map(([id, label]) => html`
          <div class=${classMap({ row: true, on: this.active === id })}>
            <a class="link" href="#${id}" @click=${() => (this.active = id)}>
              <svg width="40" height="40" viewBox="0 0 40 40" aria-hidden="true">${navIcons[id]}</svg><span class="label">${label}</span>
            </a>
          </div>`)}
      </nav>
      <div class="logo">
        <svg width="50" height="44" viewBox="0 2 48 42" aria-hidden="true">${brandMark("#fff")}</svg>
        <span class="mark"><span class="word">lifesize</span><span class="reg">®</span></span>
      </div>`;
  }
}

@customElement("app-root")
export class AppRoot extends LitElement {
  static styles = css`
    :host { display: flex; flex-direction: column; min-height: 100vh; background: #fff; font-family: "Liberation Sans", Arial, sans-serif; color: #434549; }
    button { font: inherit; color: inherit; border: 0; background: none; padding: 0; cursor: pointer; }
    svg { display: block; }
    a { text-decoration: none; }
    .topbar { display: flex; align-items: center; justify-content: flex-end; height: 80px; padding: 0 30px; background: #25027d; }
    .help { margin: 0 30px 0 40px; }
    .body { flex: 1; display: flex; }
    side-nav { flex: none; border-bottom-left-radius: 12px; }
    main { flex: 1; min-width: 0; display: flex; flex-direction: column; background: #efefef; }
    .head { background: #fff; border-bottom: 4px solid #cfcfcf; }
    .intro { padding: 18px 36px 0; }
    .crumbs { font-size: 26px; line-height: 36px; color: #000; }
    .crumbs a, .crumbs i { color: #434549; font-style: normal; }
    h1 { margin: 20px 0 20px -4px; font-size: 48px; line-height: 68px; font-weight: 400; color: #000; }
    .facts { display: flex; margin: 0 0 16px; padding: 0; list-style: none; font-size: 26px; line-height: 36px; height: 40px; }
    .facts li + li { margin-left: 33px; padding-left: 33px; border-left: 3px solid #434549; }
    .facts.when { font-size: 27px; }
    .dark { color: #222; }
    .tabs { display: flex; padding-left: 30px; gap: 30px; margin-top: 26px; }
    .tab { height: 80px; padding: 12px 22px 0; margin-bottom: -4px; border-bottom: 4px solid transparent; font-size: 32px; }
    .tab.on { color: #4340d2; border-color: #4340d2; font-weight: 700; }
    .stage { padding: 32px 16px; }
    footer { display: flex; justify-content: center; gap: 32px; margin-top: auto; padding: 0 30px 24px 0; font-size: 26px; line-height: 34px; }
    footer a { color: #109b98; }
  `;

  @state() private tab = "Geo Distribution";

  private facts = [
    [["Moderator:", ""], ["Extension:", "123456\u00a0"], ["Meeting Type: VMR", ""], ["Recording: None", ""]],
    [["Date: 12/9/2019", ""], ["Total Participants: 32", ""], ["Start Time: 3:13 PM", ""], ["End Time: 4:12 PM", ""], ["Duration: 59 min", ""]],
  ];

  render() {
    return html`
      <browser-chrome pageTitle="Lifesize - Admin" address="manage.lifesize.com"></browser-chrome>
      <header class="topbar">
        <button aria-label="Announcements">
          <svg width="37" height="32" viewBox="0 0 37 32" fill="#5b3fa0"><path d="M7 6v15H5q-5 0-5-4v-7q0-4 5-4zM8 6l23-5v25L17 22l-4-1 3 9-3 2-5-10zM32 9q5 0 5 4.500T32 18z"/></svg>
        </button>
        <button class="help" aria-label="Help">
          <svg width="36" height="36" viewBox="0 0 36 36"><circle cx="18" cy="18" r="18" fill="#9380bf"/><path d="M12.500 13c0-8 12-8 12-.5 0 5-6.500 5.500-6.500 11.500" fill="none" stroke="#25027d" stroke-width="3.600"/><rect x="16" y="27" width="4" height="3.500" fill="#25027d"/></svg>
        </button>
        <button aria-label="Account">
          <svg width="60" height="60" viewBox="0 0 60 60"><clipPath id="disc"><circle cx="30" cy="30" r="30"/></clipPath><g clip-path="url(#disc)"><rect width="60" height="60" fill="#d3d2d3"/><circle cx="30" cy="25" r="13" fill="#706f70"/><ellipse cx="30" cy="60" rx="28" ry="18" fill="#706f70"/></g></svg>
        </button>
      </header>
      <div class="body">
        <side-nav></side-nav>
        <main>
          <section class="head">
            <div class="intro">
              <div class="crumbs"><a href="#past">Past Meetings</a> <i>&gt;</i> Monthly Training Meeting</div>
              <h1>Monthly Training Meeting</h1>
              ${this.facts.map((row, i) => html`<ul class=${classMap({ facts: true, when: i === 1 })}>${row.map(([a, b]) => html`<li>${a}${b ? html` <span class="dark">${b}</span>` : ""}</li>`)}</ul>`)}
            </div>
            <div class="tabs" role="tablist">
              ${["Participants", "Geo Distribution"].map((t) => html`
                <button role="tab" aria-selected=${this.tab === t} class=${classMap({ tab: true, on: this.tab === t })} @click=${() => (this.tab = t)}>${t}</button>`)}
            </div>
          </section>
          <div class="stage"><geo-map></geo-map></div>
          <footer>
            <span>© 2020 Lifesize, Inc. All rights reserved.</span>
            <a href="#privacy">Privacy Policy</a><span>|</span>
            <a href="#tos">Terms of Service</a><span>|</span>
            <a href="#status">Lifesize status</a>
          </footer>
        </main>
      </div>`;
  }
}
